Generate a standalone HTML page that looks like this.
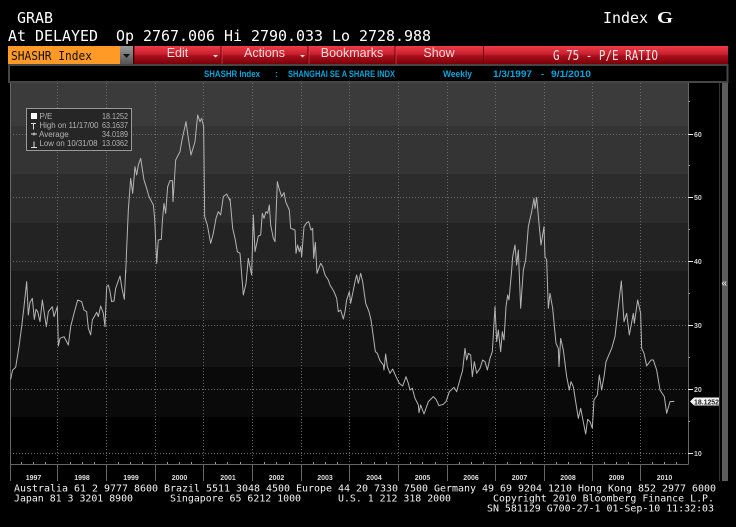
<!DOCTYPE html>
<html>
<head>
<meta charset="utf-8">
<style>
html,body{margin:0;padding:0;background:#000;width:736px;height:527px;overflow:hidden}
svg{display:block}
.m{font-family:"DejaVu Sans Mono","Liberation Mono",monospace}
.s{font-family:"Liberation Sans",sans-serif}
</style>
</head>
<body>
<svg width="736" height="527" viewBox="0 0 736 527" xmlns="http://www.w3.org/2000/svg">
<defs>
<linearGradient id="red" x1="0" y1="0" x2="0" y2="1">
<stop offset="0" stop-color="#f03a48"/><stop offset=".45" stop-color="#c8202e"/><stop offset=".55" stop-color="#a80f1c"/><stop offset="1" stop-color="#7a0008"/>
</linearGradient>
<linearGradient id="gr" x1="0" y1="0" x2="0" y2="1">
<stop offset="0" stop-color="#9a9a9a"/><stop offset="1" stop-color="#555"/>
</linearGradient>
</defs>
<rect width="736" height="527" fill="#000"/>

<!-- top text -->
<g class="m" font-size="15" fill="#fff">
<text x="17" y="23" textLength="36" lengthAdjust="spacingAndGlyphs">GRAB</text>
<text x="8" y="41" textLength="423" lengthAdjust="spacingAndGlyphs" xml:space="preserve">At DELAYED  Op 2767.006 Hi 2790.033 Lo 2728.988</text>
<text x="603" y="23" textLength="45" lengthAdjust="spacingAndGlyphs">Index</text>
</g>
<text x="657" y="23" font-family="'Liberation Serif',serif" font-weight="bold" font-size="17" fill="#fff" textLength="16" lengthAdjust="spacingAndGlyphs">G</text>

<!-- toolbar -->
<rect x="8" y="46" width="112" height="18" fill="#ff9a26"/>
<text x="11" y="60" class="m" font-size="12.500" fill="#111" textLength="81" lengthAdjust="spacingAndGlyphs">SHASHR Index</text>
<rect x="120" y="46" width="13" height="18" fill="url(#gr)"/>
<path d="M123 54h7l-3.500 4z" fill="#111"/>
<rect x="134" y="46" width="594" height="18" fill="url(#red)"/>
<g stroke="#6d0008" stroke-width="1">
<path d="M134 46v18M221 46v18M308 46v18M395 46v18M483.500 46v18"/>
</g>
<g stroke="#e8505c" stroke-width="1" opacity=".6">
<path d="M222 46v18M309 46v18M396 46v18"/>
</g>
<g class="s" font-size="12.500" fill="#f6dcdc" text-anchor="middle">
<text x="177.500" y="57">Edit</text>
<text x="264.500" y="57">Actions</text>
<text x="352" y="57">Bookmarks</text>
<text x="439" y="57">Show</text>
</g>
<path d="M213 55h5l-2.500 2.500zM300 55h5l-2.500 2.500z" fill="#f4dede"/>
<text x="553" y="60" class="m" font-size="13" fill="#f6e6e6" textLength="105" lengthAdjust="spacingAndGlyphs">G 75 - P/E RATIO</text>

<!-- sub header -->
<rect x="9" y="65" width="718.500" height="17" fill="#000" stroke="#464646" stroke-width="2"/>
<g class="s" font-size="9" font-weight="bold" fill="#0aa6dc">
<text x="204" y="77" textLength="56" lengthAdjust="spacingAndGlyphs">SHASHR Index</text>
<text x="275" y="77">:</text>
<text x="288" y="77" textLength="107" lengthAdjust="spacingAndGlyphs">SHANGHAI SE A SHARE INDX</text>
<text x="443" y="77" textLength="29" lengthAdjust="spacingAndGlyphs">Weekly</text>
<text x="493" y="77" textLength="39" lengthAdjust="spacingAndGlyphs">1/3/1997</text>
<text x="541" y="77">-</text>
<text x="551" y="77" textLength="40" lengthAdjust="spacingAndGlyphs">9/1/2010</text>
</g>

<!-- plot bands -->
<rect x="10" y="83" width="679" height="43" fill="#3b3b3b"/>
<rect x="10" y="126" width="679" height="48" fill="#343434"/>
<rect x="10" y="174" width="679" height="49" fill="#2c2c2c"/>
<rect x="10" y="223" width="679" height="48" fill="#232323"/>
<rect x="10" y="271" width="679" height="49" fill="#1a1a1a"/>
<rect x="10" y="320" width="679" height="47" fill="#131313"/>
<rect x="10" y="367" width="679" height="50" fill="#0a0a0a"/>
<rect x="10" y="417" width="679" height="48" fill="#000"/>

<!-- grid -->
<g stroke="#6a6a6a" stroke-width="1" stroke-dasharray="1 2" fill="none">
<path d="M10 134.500H688M10 197.500H688M10 261.500H688M10 325.500H688M10 389.500H688M10 453.500H688"/>
<path d="M57.500 83V464M106.500 83V464M155.500 83V464M203.500 83V464M252.500 83V464M301.500 83V464M349.500 83V464M398.500 83V464M447.500 83V464M495.500 83V464M544.500 83V464M592.500 83V464M640.500 83V464"/>
</g>

<!-- axes -->
<g stroke="#666" stroke-width="1" fill="none">
<path d="M10.500 83V481M688.500 83V464.500M10 464.500H688.500"/>
<path d="M57.500 464V481M106.500 464V481M155.500 464V481M203.500 464V481M252.500 464V481M301.500 464V481M349.500 464V481M398.500 464V481M447.500 464V481M495.500 464V481M544.500 464V481M592.500 464V481M640.500 464V481"/>
</g>
<g stroke="#999" stroke-width="1">
<path d="M21.500 464v-2M33.500 464v-2M45.500 464v-2M70.500 464v-2M82.500 464v-2M94.500 464v-2M118.500 464v-2M130.500 464v-2M142.500 464v-2M167.500 464v-2M179.500 464v-2M191.500 464v-2M215.500 464v-2M227.500 464v-2M240.500 464v-2M264.500 464v-2M276.500 464v-2M289.500 464v-2M313.500 464v-2M325.500 464v-2M337.500 464v-2M361.500 464v-2M374.500 464v-2M386.500 464v-2M410.500 464v-2M422.500 464v-2M435.500 464v-2M459.500 464v-2M471.500 464v-2M483.500 464v-2M507.500 464v-2M520.500 464v-2M532.500 464v-2M556.500 464v-2M568.500 464v-2M580.500 464v-2M604.500 464v-2M616.500 464v-2M628.500 464v-2M652.500 464v-2M664.500 464v-2M676.500 464v-2"/>
</g>

<!-- right ticks -->
<path d="M688 134.500h5M688 197.500h5M688 261.500h5M688 325.500h5M688 389.500h5M688 453.500h5" stroke="#eee" stroke-width="1"/>
<path d="M688 101.500h2M688 165.500h2M688 229.500h2M688 293.500h2M688 357.500h2M688 421.500h2" stroke="#888" stroke-width="1"/>
<g class="s" font-size="7" font-weight="bold" fill="#ccc">
<text x="694" y="137">60</text>
<text x="694" y="200">50</text>
<text x="694" y="264">40</text>
<text x="694" y="328">30</text>
<text x="694" y="392">20</text>
<text x="694" y="456">10</text>
</g>

<!-- right rail -->
<rect x="719" y="83" width="1" height="398" fill="#333"/>
<rect x="722" y="83" width="6" height="398" fill="#5c5c5c"/>
<text x="721.500" y="286" class="s" font-size="10" fill="#fff">«</text>

<!-- series -->
<g fill="none" stroke="#b4b4b4" stroke-width="3" stroke-linejoin="round">
<polyline transform="translate(0,270) scale(.33333)" points="32,328 38,300 47,292 57,230 65,170 72,110 80,35 85,135 90,97 97,85 103,148 108,118 113,125 120,155 127,90 133,130 139,170 145,125 157,110 162,140 172,110 175,228 180,205 192,200 205,225 212,170 222,130 233,90 245,95 252,120 260,125 265,175 272,195 277,150 290,127 295,140 302,108 310,130 315,170 320,50 325,45 330,65 335,95 342,93 347,55 360,18 366,55 373,88 377,0"/>
<polyline transform="translate(0,110) scale(.33333)" points="377,490 380,415 385,300 392,205 398,250 405,170 410,195 415,165 422,145 432,210 440,235 447,260 460,285 464,325 470,460 475,390 484,388 487,335 492,280 497,310 503,230 510,212 517,212 519,275 527,150 540,125 546,90 558,35 565,85 573,135 585,95 593,15 600,35 605,25 611,50 614,320 622,345 632,400 640,370 648,325 655,305 662,315 670,260 680,252 690,272"/>
<polyline transform="translate(230,110) scale(.33333)" points="0,265 8,355 15,385 22,425 30,430 40,555 48,520 55,445 65,495 70,315 75,425 85,378 92,375 97,310 102,325 108,305 113,310 118,285 122,345 130,385 135,395 142,215 147,235 155,260 162,248 167,275 178,300 182,355 195,360 198,430 203,405 208,425 212,410 215,440 222,350 230,338 236,335 243,360 248,355 251,445 256,397 261,490 272,460 278,470 285,495 295,510"/>
<polyline transform="translate(230,270) scale(.33333)" points="295,30 300,45 312,65 320,85 325,125 332,120 340,147 345,125 350,90 358,65 362,100 368,70 376,30 380,15 385,40 392,10 398,35 407,100 417,125 423,150 430,200 436,245 442,250 450,272 460,285 462,300 467,252 472,290 480,310 488,297 498,320 508,340 518,348 528,320 535,340 540,360 547,355 555,385 565,405 567,428 572,405 582,432 595,395 610,380 618,388 627,407 640,403 648,395 658,365 672,352 680,365 690,328"/>
<polyline transform="translate(460,180) scale(.33333)" points="0,598 8,570 15,505 20,540 25,520 32,525 37,590 43,545 50,580 60,565 68,540 75,545 82,570 90,535 97,515 105,380 110,485 115,450 122,515 127,455 132,480 138,380 143,345 147,360 155,270 158,230 165,195 170,255 175,210 182,385 190,270 197,240 205,140 215,95 222,55 225,85 230,52 237,130 243,195 252,140 255,230 260,240 265,385 270,340 278,385 288,490 295,505 297,560 302,475 310,510 320,590 328,630 333,605 340,620 347,665 355,715 362,685 377,762 383,718 390,725 397,745 402,660 412,645 418,585 425,630 432,590 438,545 455,505 465,470 475,380 484,303 492,425 500,400 508,465 520,400 523,430 533,360 542,400 545,505 552,520 560,558 573,540 580,540 590,570 600,630 613,650 620,700 630,665 643,664"/>
</g>

<!-- value tag -->
<path d="M690 401.500l4-4h25v8h-25z" fill="#f2f2f2"/>
<text x="694" y="404.500" class="s" font-size="7" font-weight="bold" fill="#222" textLength="25" lengthAdjust="spacingAndGlyphs">18.1252</text>

<!-- legend -->
<rect x="26.500" y="108.500" width="105" height="42" fill="#262626" stroke="#9a9a9a" stroke-width="1"/>
<rect x="31" y="113" width="6" height="6" fill="#fff"/>
<path d="M31 123.500h5M33.500 123.500v6M31 134h6M34 132.500v3M31 147.500h6M34 141.500v6" stroke="#ddd" stroke-width="1" fill="none"/>
<g class="s" font-size="8" fill="#b4b4b4">
<text x="39.500" y="119">P/E</text>
<text x="39.500" y="128" textLength="59" lengthAdjust="spacingAndGlyphs">High on 11/17/00</text>
<text x="39" y="137">Average</text>
<text x="39.500" y="146" textLength="58" lengthAdjust="spacingAndGlyphs">Low on 10/31/08</text>
<text x="102" y="119" textLength="26" lengthAdjust="spacingAndGlyphs">18.1252</text>
<text x="102" y="128" textLength="26" lengthAdjust="spacingAndGlyphs">63.1637</text>
<text x="102" y="137" textLength="26" lengthAdjust="spacingAndGlyphs">34.0189</text>
<text x="102" y="146" textLength="26" lengthAdjust="spacingAndGlyphs">13.0362</text>
</g>

<!-- years -->
<g class="s" font-size="7" font-weight="bold" fill="#ddd" text-anchor="middle">
<text x="33.500" y="480">1997</text>
<text x="82" y="480">1998</text>
<text x="131" y="480">1999</text>
<text x="179.500" y="480">2000</text>
<text x="228" y="480">2001</text>
<text x="276.500" y="480">2002</text>
<text x="325" y="480">2003</text>
<text x="374" y="480">2004</text>
<text x="422.500" y="480">2005</text>
<text x="471" y="480">2006</text>
<text x="519.500" y="480">2007</text>
<text x="568" y="480">2008</text>
<text x="616.500" y="480">2009</text>
<text x="664.500" y="480">2010</text>
</g>

<!-- footer -->
<g class="m" font-size="9.900" fill="#f2f2f2">
<text x="14" y="491.500" textLength="702" lengthAdjust="spacingAndGlyphs" xml:space="preserve">Australia 61 2 9777 8600 Brazil 5511 3048 4500 Europe 44 20 7330 7500 Germany 49 69 9204 1210 Hong Kong 852 2977 6000</text>
<text x="14" y="501.500" textLength="119" lengthAdjust="spacingAndGlyphs">Japan 81 3 3201 8900</text>
<text x="170" y="501.500" textLength="131" lengthAdjust="spacingAndGlyphs">Singapore 65 6212 1000</text>
<text x="338" y="501.500" textLength="113" lengthAdjust="spacingAndGlyphs" xml:space="preserve">U.S. 1 212 318 2000</text>
<text x="493" y="501.500" textLength="221" lengthAdjust="spacingAndGlyphs">Copyright 2010 Bloomberg Finance L.P.</text>
<text x="487" y="511.500" textLength="227" lengthAdjust="spacingAndGlyphs">SN 581129 G700-27-1 01-Sep-10 11:32:03</text>
</g>
</svg>
</body>
</html>
